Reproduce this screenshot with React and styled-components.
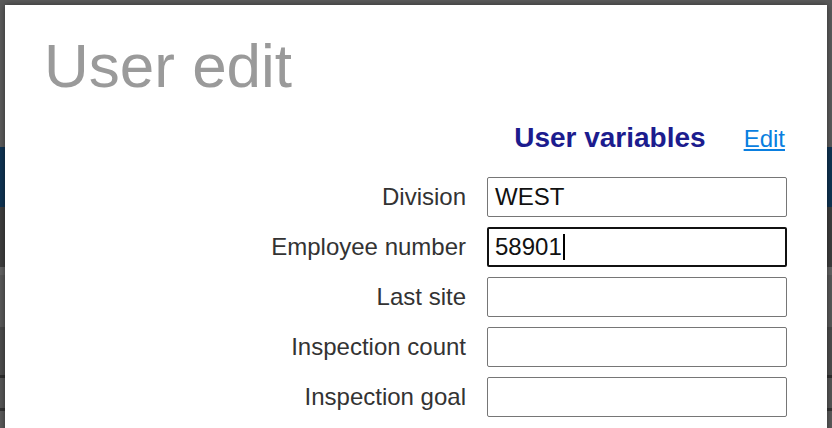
import React from "react";
import styled, { createGlobalStyle } from "styled-components";

const GlobalStyle = createGlobalStyle`
  html, body {
    margin: 0;
    padding: 0;
    width: 832px;
    height: 428px;
    overflow: hidden;
    font-family: "Liberation Sans", Arial, sans-serif;
  }
`;

const Page = styled.div`
  position: relative;
  width: 832px;
  height: 428px;
  overflow: hidden;
  background: #595959;
`;

// dimmed page behind the dialog
const Backdrop = styled.div`
  display: flex;
  flex-direction: column;
  height: 100%;
`;

const Band = styled.div`
  height: ${(p) => p.h}px;
  background: ${(p) => p.bg};
  border-bottom: ${(p) => (p.line ? `3px solid ${p.line}` : "none")};
  flex-shrink: 0;
`;

const Modal = styled.div`
  position: absolute;
  top: 5px;
  left: 5px;
  width: 822px;
  height: 460px;
  background: #ffffff;
  box-shadow: 0 0 6px rgba(0, 0, 0, 0.45);
  box-sizing: border-box;
  padding: 30px 40px 0 39px;
  display: flex;
  flex-direction: column;
`;

const Title = styled.h1`
  margin: 0;
  font-size: 62px;
  line-height: 62px;
  font-weight: normal;
  color: #9a9a9a;
`;

const SectionHeader = styled.div`
  display: flex;
  justify-content: flex-end;
  align-items: baseline;
  gap: 38px;
  margin-top: 28px;
  padding-right: 2px;
`;

const SectionTitle = styled.h2`
  margin: 0;
  font-size: 28px;
  line-height: 26px;
  font-weight: bold;
  color: #1c1c8e;
`;

const EditLink = styled.a`
  font-size: 24px;
  line-height: 26px;
  color: #0a7fe0;
  text-decoration: underline;
  cursor: pointer;
`;

const Form = styled.div`
  display: grid;
  grid-template-columns: auto 300px;
  justify-content: end;
  align-items: center;
  column-gap: 21px;
  row-gap: 10px;
  margin-top: 25px;
`;

const Label = styled.label`
  text-align: right;
  font-size: 24px;
  color: #333333;
`;

const Field = styled.div`
  box-sizing: border-box;
  height: 40px;
  display: flex;
  align-items: center;
  padding: 0 ${(p) => (p.$focused ? 6 : 7)}px;
  border: ${(p) => (p.$focused ? "2px solid #111111" : "1px solid #767676")};
  border-radius: 2px;
  font-size: 24px;
  color: #111111;
  background: #ffffff;
`;

const Caret = styled.span`
  display: inline-block;
  width: 2px;
  height: 26px;
  margin-left: 1px;
  background: #000000;
`;

const FIELDS = [
  { label: "Division", value: "WEST" },
  { label: "Employee number", value: "58901", focused: true },
  { label: "Last site", value: "" },
  { label: "Inspection count", value: "" },
  { label: "Inspection goal", value: "" },
];

export default function App() {
  return (
    <>
      <GlobalStyle />
      <Page>
        <Backdrop>
          <Band h={147} bg="#5a5a5a" />
          <Band h={60} bg="#0f3352" />
          <Band h={60} bg="#3d3d3d" />
          <Band h={8} bg="#626262" />
          <Band h={52} bg="#585858" line="#474747" />
          <Band h={45} bg="#4c4c4c" line="#2e2e2e" />
          <Band h={30} bg="#555555" line="#333333" />
          <Band h={20} bg="#5a5a5a" />
        </Backdrop>
        <Modal>
          <Title>User edit</Title>
          <SectionHeader>
            <SectionTitle>User variables</SectionTitle>
            <EditLink>Edit</EditLink>
          </SectionHeader>
          <Form>
            {FIELDS.map((f) => (
              <React.Fragment key={f.label}>
                <Label>{f.label}</Label>
                <Field $focused={f.focused}>
                  {f.value}
                  {f.focused && <Caret />}
                </Field>
              </React.Fragment>
            ))}
          </Form>
        </Modal>
      </Page>
    </>
  );
}
